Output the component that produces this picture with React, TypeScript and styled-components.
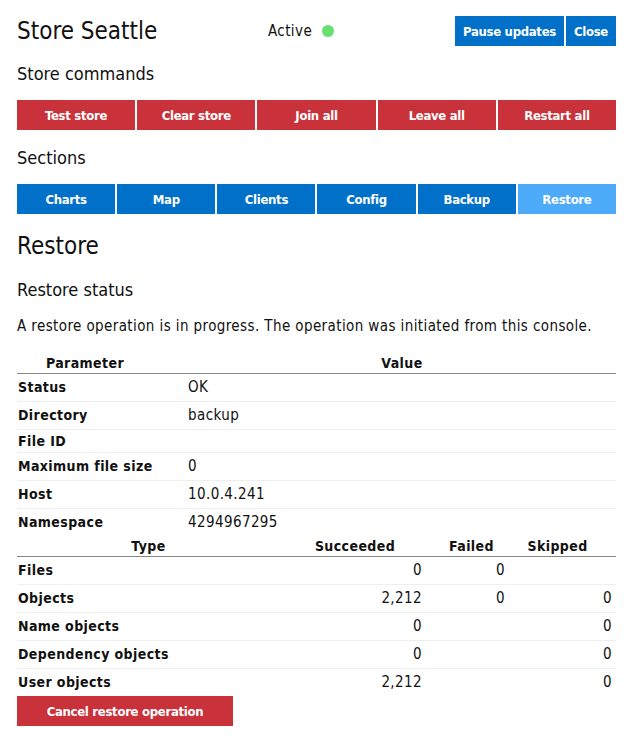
import styled, { createGlobalStyle } from "styled-components";

const GlobalStyle = createGlobalStyle`
  body {
    margin: 0;
    background: #fff;
    color: #111;
    font-family: "DejaVu Sans Condensed", "DejaVu Sans", sans-serif;
  }
`;

const Page = styled.div`
  padding: 16px 16px 12px 17px;
  width: 599px;
`;

const TopBar = styled.div`
  display: flex;
  align-items: center;
  height: 30px;
`;

const Title = styled.h1`
  margin: 0;
  font-size: 24px;
  font-weight: normal;
  width: 251px;
`;

const Status = styled.div`
  display: flex;
  align-items: center;
  gap: 10px;
  font-size: 15px;
  letter-spacing: 0.4px;
  flex: 1;
`;

const Dot = styled.span`
  width: 12px;
  height: 12px;
  border-radius: 50%;
  background: #66e06f;
`;

const ButtonGroup = styled.div`
  display: flex;
  gap: 2px;
`;

const Button = styled.button<{ $tone: "red" | "blue" | "light" }>`
  border: none;
  height: 30px;
  padding: 0 8px;
  font-family: inherit;
  font-size: 13px;
  font-weight: bold;
  letter-spacing: -0.3px;
  color: #fff;
  cursor: pointer;
  background: ${(p) =>
    p.$tone === "red" ? "#c9323b" : p.$tone === "blue" ? "#0070c9" : "#4eabfa"};
`;

const BarRow = styled.div<{ $n: number }>`
  display: grid;
  grid-template-columns: repeat(${(p) => p.$n}, 1fr);
  gap: 2px;
`;

const Heading = styled.h3`
  margin: 0;
  font-size: 18px;
  line-height: 22px;
  font-weight: normal;
  padding: 17px 0 15px;
`;

const BigHeading = styled.h2`
  margin: 0;
  font-size: 24px;
  line-height: 28px;
  font-weight: normal;
  padding: 18px 0 2px;
`;

const Text = styled.p`
  margin: 0;
  padding: 0 0 17px;
  font-size: 15px;
  line-height: 20px;
  letter-spacing: 0.4px;
`;

const Table = styled.table`
  width: 100%;
  border-collapse: collapse;
  font-size: 15px;
  letter-spacing: 0.4px;
`;

const Th = styled.th<{ $w?: number }>`
  font-weight: bold;
  font-size: 14px;
  line-height: 18px;
  text-align: center;
  padding: 1px 0 1px;
  border-bottom: 1px solid #888;
  ${(p) => (p.$w ? `width: ${p.$w}px;` : "")}
`;

const Tr = styled.tr`
  & + & td {
    border-top: 1px solid #eee;
  }
`;

const Label = styled.td`
  font-weight: bold;
  font-size: 14px;
  line-height: 22px;
  padding: 0 0 0 1px;
  vertical-align: baseline;
  white-space: nowrap;
`;

const Value = styled.td<{ $indent?: number }>`
  line-height: 21px;
  vertical-align: baseline;
  padding: 3px 0 3px ${(p) => p.$indent ?? 0}px;
`;

const Num = styled.td<{ $pr?: number }>`
  text-align: right;
  line-height: 21px;
  vertical-align: baseline;
  padding: 3px ${(p) => p.$pr ?? 8}px 3px 0;
`;

const Footer = styled.div``;

const CancelButton = styled(Button)`
  width: 216px;
`;

const params: [string, string][] = [
  ["Status", "OK"],
  ["Directory", "backup"],
  ["File ID", ""],
  ["Maximum file size", "0"],
  ["Host", "10.0.4.241"],
  ["Namespace", "4294967295"],
];

const counts: [string, string, string, string][] = [
  ["Files", "0", "0", ""],
  ["Objects", "2,212", "0", "0"],
  ["Name objects", "0", "", "0"],
  ["Dependency objects", "0", "", "0"],
  ["User objects", "2,212", "", "0"],
];

const commands = ["Test store", "Clear store", "Join all", "Leave all", "Restart all"];
const sections = ["Charts", "Map", "Clients", "Config", "Backup", "Restore"];

export default function App() {
  return (
    <>
      <GlobalStyle />
      <Page>
        <TopBar>
          <Title>Store Seattle</Title>
          <Status>
            Active <Dot />
          </Status>
          <ButtonGroup>
            <Button $tone="blue">Pause updates</Button>
            <Button $tone="blue">Close</Button>
          </ButtonGroup>
        </TopBar>

        <Heading>Store commands</Heading>
        <BarRow $n={commands.length}>
          {commands.map((c) => (
            <Button key={c} $tone="red">
              {c}
            </Button>
          ))}
        </BarRow>

        <Heading>Sections</Heading>
        <BarRow $n={sections.length}>
          {sections.map((s) => (
            <Button key={s} $tone={s === "Restore" ? "light" : "blue"}>
              {s}
            </Button>
          ))}
        </BarRow>

        <BigHeading>Restore</BigHeading>
        <Heading>Restore status</Heading>
        <Text>
          A restore operation is in progress. The operation was initiated from this
          console.
        </Text>

        <Table>
          <thead>
            <tr>
              <Th $w={136}>Parameter</Th>
              <Th style={{ paddingLeft: 35 }}>Value</Th>
            </tr>
          </thead>
          <tbody>
            {params.map(([k, v]) => (
              <Tr key={k}>
                <Label>{k}</Label>
                <Value $indent={35}>{v}</Value>
              </Tr>
            ))}
          </tbody>
        </Table>

        <Table>
          <thead>
            <tr>
              <Th $w={263}>Type</Th>
              <Th $w={150}>Succeeded</Th>
              <Th $w={83}>Failed</Th>
              <Th style={{ paddingRight: 14 }}>Skipped</Th>
            </tr>
          </thead>
          <tbody>
            {counts.map(([k, s, f, sk]) => (
              <Tr key={k}>
                <Label>{k}</Label>
                <Num>{s}</Num>
                <Num>{f}</Num>
                <Num $pr={4}>{sk}</Num>
              </Tr>
            ))}
          </tbody>
        </Table>

        <Footer>
          <CancelButton $tone="red">Cancel restore operation</CancelButton>
        </Footer>
      </Page>
    </>
  );
}
